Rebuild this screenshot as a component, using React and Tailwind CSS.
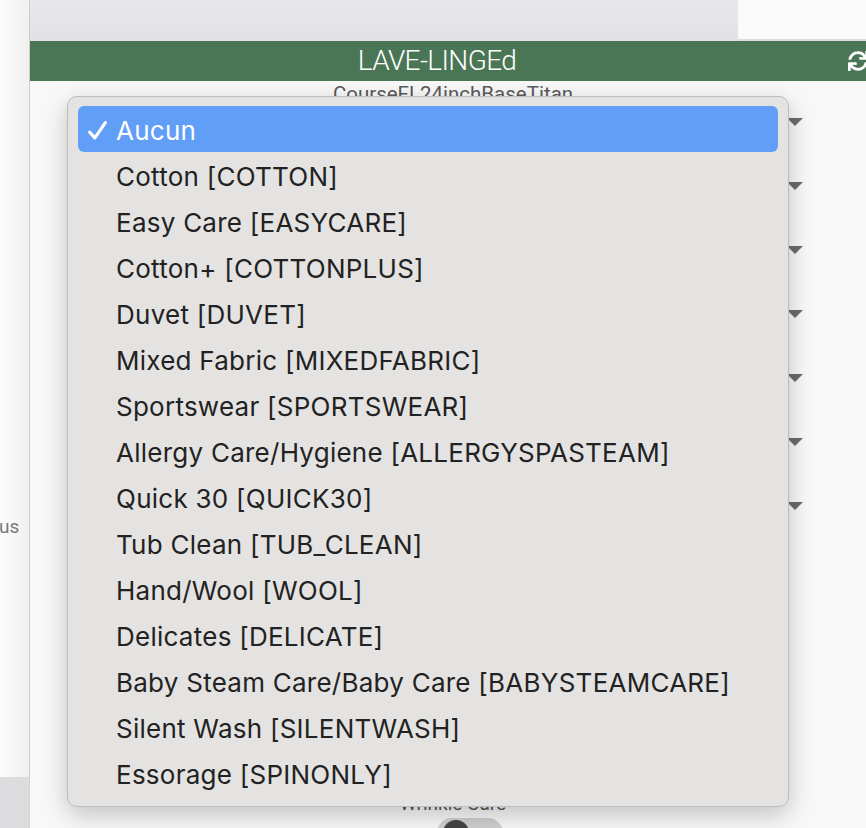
import { FaSync } from 'react-icons/fa';

const programmes = [
  'Aucun',
  'Cotton [COTTON]',
  'Easy Care [EASYCARE]',
  'Cotton+ [COTTONPLUS]',
  'Duvet [DUVET]',
  'Mixed Fabric [MIXEDFABRIC]',
  'Sportswear [SPORTSWEAR]',
  'Allergy Care/Hygiene [ALLERGYSPASTEAM]',
  'Quick 30 [QUICK30]',
  'Tub Clean [TUB_CLEAN]',
  'Hand/Wool [WOOL]',
  'Delicates [DELICATE]',
  'Baby Steam Care/Baby Care [BABYSTEAMCARE]',
  'Silent Wash [SILENTWASH]',
  'Essorage [SPINONLY]',
];

function Caret() {
  return (
    <svg width="16" height="8" viewBox="0 0 16 8" className="block">
      <path d="M0 0 H16 L8 8 Z" fill="#6b6b6b" />
    </svg>
  );
}

function Check() {
  return (
    <svg width="21" height="21" viewBox="0 0 20 20" className="block">
      <path d="M2.5 11.5 L7.5 17 L17.5 2.5" fill="none" stroke="white" strokeWidth="3" strokeLinecap="round" strokeLinejoin="round" />
    </svg>
  );
}

export default function App() {
  const selected = 0;

  return (
    <div
      className="relative flex w-[866px] h-[828px] overflow-hidden bg-[#f4f4f4]"
      style={{ fontFamily: 'Roboto, "Noto Sans", sans-serif' }}
    >
      {/* left sidebar of the other window */}
      <div className="w-[30px] flex flex-col shrink-0 border-r border-[#d4d4d6]">
        <div className="h-[777px] bg-gradient-to-r from-[#fdfdfd] to-[#f0f0f0] pt-[514px] shadow-[0_2px_3px_rgba(0,0,0,0.08)]">
          <div className="text-[19px] text-[#7a7a7a] leading-[26px] -ml-[1px]">us</div>
        </div>
        <div className="flex-1 bg-[#dcdcde]" />
      </div>

      {/* main panel */}
      <div className="flex-1 flex flex-col">
        <div className="h-[41px] flex shrink-0">
          <div className="w-[708px] bg-gradient-to-b from-[#e8e8ea] to-[#e2e2e4]" />
          <div className="flex-1 bg-[#fafafa] border-b-2 border-[#dedede]" />
        </div>

        <div className="h-[40px] bg-[#4a7656] flex items-center justify-center relative shrink-0 pr-[22px]">
          <span className="text-white text-[28px] font-light tracking-[-0.6px] leading-none">
            LAVE-LINGEd
          </span>
          <FaSync className="absolute left-[818px] top-[10px] text-white" size={20} />
        </div>

        <div className="flex-1 bg-[#f8f8f8] flex flex-col">
          <div className="text-center text-[20.5px] text-[#5a5a5a] leading-[26px] pl-[10px]">
            CourseFL24inchBaseTitan
          </div>
          <div className="flex flex-col items-end pr-[63px] -mt-[17px]">
            {Array.from({ length: 7 }).map((_, i) => (
              <div key={i} className="h-[64px] flex items-center">
                <Caret />
              </div>
            ))}
          </div>
          <div className="mt-auto flex flex-col items-center pl-[10px]">
            <div className="text-[19px] text-[#555] leading-[22px]">Wrinkle Care</div>
            <div className="w-[66px] h-[30px] rounded-full bg-[#cfcfcf] mt-[3px] ml-[34px] flex items-center px-[6px] -mb-[20px]">
              <div className="w-[26px] h-[26px] rounded-full bg-[#454545]" />
            </div>
          </div>
        </div>
      </div>

      {/* open select menu */}
      <div
        className="absolute left-[67px] top-[96px] w-[722px] h-[711px] bg-[#e4e3e1] border border-[#bdbdbd] rounded-[10px] shadow-[0_8px_24px_rgba(0,0,0,0.22)] px-[10px] py-[9px]"
        style={{ fontFamily: '"Inter", "Helvetica Neue", sans-serif' }}
      >
        {programmes.map((p, i) => (
          <div
            key={p}
            className={
              i === selected
                ? 'h-[46px] flex items-center rounded-[6px] bg-[#619ef8] text-white pt-[3px]'
                : 'h-[46px] flex items-center text-[#222] pt-[3px]'
            }
          >
            <span className="w-[38px] pl-[9px]">{i === selected ? <Check /> : null}</span>
            <span className="text-[26px] tracking-[0.25px] leading-none">{p}</span>
          </div>
        ))}
      </div>
    </div>
  );
}
